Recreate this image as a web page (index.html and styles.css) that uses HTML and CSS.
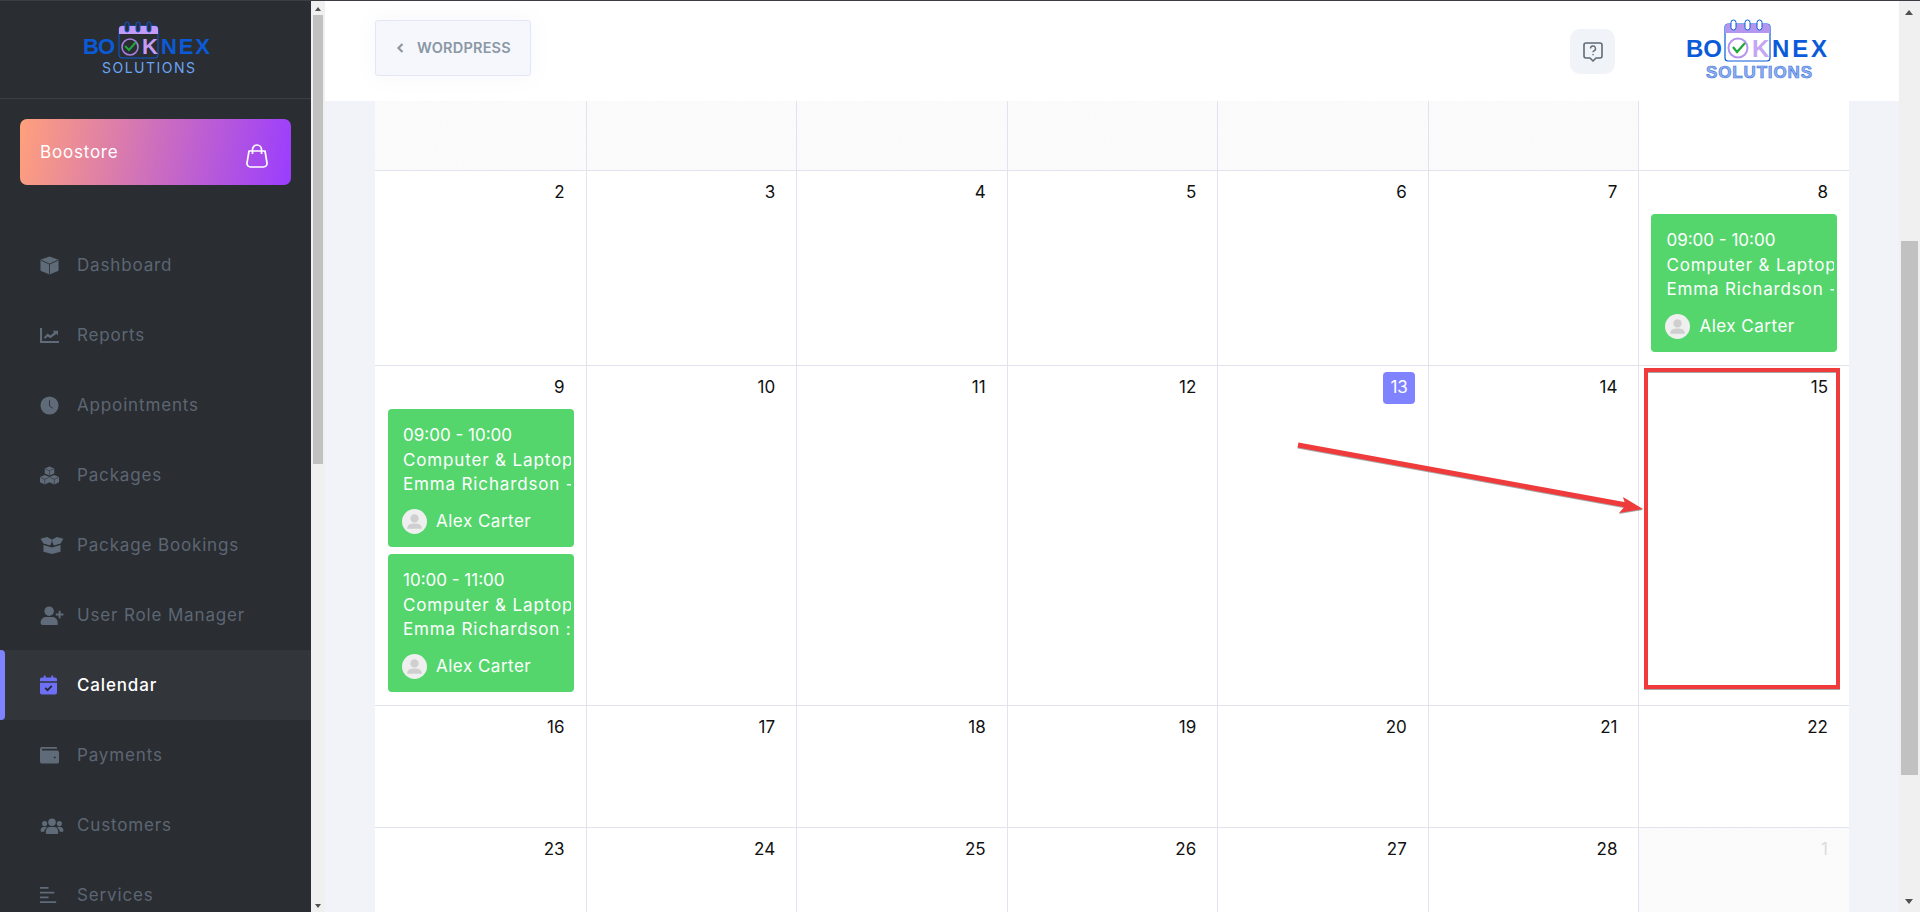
FILE: index.html
```html
<!DOCTYPE html>
<html lang="en">
<head>
    <meta charset="UTF-8">
    <title>Calendar</title>
    <link rel="stylesheet" href="styles.css">
</head>
<body>
<div class="app">
    <aside class="sidebar">
        <div class="side-logo">
            <svg width="130" height="56" viewBox="0 0 130 56">
                <rect x="36" y="6" width="39" height="32" rx="3" fill="none" stroke="#0b5bd9" stroke-width="1"/>
                <path d="M36 14V9a3 3 0 0 1 3-3h33a3 3 0 0 1 3 3v5z" fill="#c59bf5"/>
                <rect x="42" y="2" width="4" height="10" rx="2" fill="#2a2d32" stroke="#0b5bd9"/>
                <rect x="53" y="2" width="4" height="10" rx="2" fill="#2a2d32" stroke="#0b5bd9"/>
                <rect x="64" y="2" width="4" height="10" rx="2" fill="#2a2d32" stroke="#0b5bd9"/>
                <circle cx="47" cy="27" r="8" fill="#2a2d32" stroke="#a87fe0" stroke-width="1.600"/>
                <path d="M42 26l4 4 7-8" fill="none" stroke="#1fa83c" stroke-width="2"/>
                <text class="logo-word" x="0" y="34" textLength="32">BO</text>
                <text class="logo-word logo-k" x="59" y="34">K</text>
                <text class="logo-word" x="78" y="34" textLength="49">NEX</text>
                <text class="logo-sub" x="19" y="53" textLength="93">SOLUTIONS</text>
            </svg>
        </div>
        <a class="boostore">
            <span>Boostore</span>
            <svg width="22" height="24" viewBox="0 0 22 24" fill="none" stroke="#fff" stroke-width="1.700">
                <path d="M3 7h16l2 12a3.500 3.500 0 0 1-3.500 4h-13A3.500 3.500 0 0 1 1 19z" stroke-linejoin="round"/>
                <path d="M6.500 10V5.500a4.500 4.500 0 0 1 9 0V10"/>
            </svg>
        </a>
        <nav class="menu">
            <a class="menu-item">
                <svg class="menu-icon" viewBox="0 0 20 20"><path d="M10 .5l9.500 3.500v11.500L10 19.500.5 15.500V4z"/><path class="cut" d="M1 4.500l9 4 9-4M10 8.500V19"/></svg>
                <span>Dashboard</span>
            </a>
            <a class="menu-item">
                <svg class="menu-icon" viewBox="0 0 20 20"><path d="M0 2h2.200v13.800H20V18H0z"/><path d="M4 12l4-4 3 2 4-3.500-1.800-1.500H19v5l-1.800-1.800L11 13 8 11l-2.500 2.500z"/></svg>
                <span>Reports</span>
            </a>
            <a class="menu-item">
                <svg class="menu-icon" viewBox="0 0 20 20"><circle cx="10" cy="10" r="9.500"/><path class="cut" d="M10 4.500V10.500l3.500 2.500" stroke-width="2"/></svg>
                <span>Appointments</span>
            </a>
            <a class="menu-item">
                <svg class="menu-icon" viewBox="0 0 20 20"><path d="M10 .5l5 2v5.500L10 10 5 8V2.500zM5 9.500l5 2V17l-5 2.500L0 17V11.500zM15 9.500l5 2V17l-5 2.500L10 17V11.500z"/><path class="cut thin" d="M5.500 3l4.500 2 4.500-2M10 5V9.500M.5 12l4.500 2 4.500-2M5 14v5M10.500 12l4.500 2 4.500-2M15 14v5"/></svg>
                <span>Packages</span>
            </a>
            <a class="menu-item">
                <svg class="menu-icon wide" viewBox="0 0 24 20"><path d="M3 9.500l9 2.500 9-2.500V16.500L12 19 3 16.500z"/><path d="M0 3l7-2 5 3 5-3 7 2-3 5-7 2-2-4-2 4-7-2z"/><path class="cut thin" d="M12 4.500V11"/></svg>
                <span>Package Bookings</span>
            </a>
            <a class="menu-item">
                <svg class="menu-icon wide" viewBox="0 0 24 20"><circle cx="9" cy="5.500" r="5"/><path d="M0 17.500C0 13.500 3 11.500 6 11.500h6c3 0 6 2 6 6V20H2a2 2 0 0 1-2-2zM19 5h2v3h3v2h-3v3h-2v-3h-3V8h3z"/></svg>
                <span>User Role Manager</span>
            </a>
            <a class="menu-item active">
                <svg class="menu-icon cal" viewBox="0 0 18 20"><path d="M4 0h2v2h6V0h2v2h2a2 2 0 0 1 2 2v2H0V4a2 2 0 0 1 2-2h2zM0 7.500h18V18a2 2 0 0 1-2 2H2a2 2 0 0 1-2-2z"/><path class="cut-dark" d="M5.500 13l2.500 2.500 4.500-4.500" stroke-width="1.800"/></svg>
                <span>Calendar</span>
            </a>
            <a class="menu-item">
                <svg class="menu-icon" viewBox="0 0 20 20"><path d="M2 1h15a1 1 0 0 1 1 1v1H2.500a1 1 0 0 0 0 1.800H18a2 2 0 0 1 2 2V16.500a2 2 0 0 1-2 2H2a2 2 0 0 1-2-2V3a2 2 0 0 1 2-2z"/><circle class="dot" cx="15.500" cy="12" r="1"/></svg>
                <span>Payments</span>
            </a>
            <a class="menu-item">
                <svg class="menu-icon wide" viewBox="0 0 24 20"><circle cx="12" cy="6.500" r="4"/><circle cx="4.200" cy="8" r="2.700"/><circle cx="19.800" cy="8" r="2.700"/><path d="M5.500 18v-2c0-3 2.500-4.500 4-4.500h5c1.500 0 4 1.500 4 4.500v2a1 1 0 0 1-1 1h-11a1 1 0 0 1-1-1zM0 15c0-2 1.500-3.500 3-3.500h2.500c.5 0 1 .2 1.400.5-1.800 1-3 2.500-3.100 4.500H1a1 1 0 0 1-1-1zM24 15c0-2-1.500-3.500-3-3.500h-2.500c-.5 0-1 .2-1.400.5 1.800 1 3 2.500 3.100 4.500H23a1 1 0 0 0 1-1z"/></svg>
                <span>Customers</span>
            </a>
            <a class="menu-item">
                <svg class="menu-icon" viewBox="0 0 20 20"><path d="M0 1h9v2H0zM0 6h15v2H0zM0 11h9v2H0zM0 16h17v2H0z"/></svg>
                <span>Services</span>
            </a>
        </nav>
    </aside>

    <div class="scrollbar side-bar">
        <div class="arrow-up"></div>
        <div class="thumb"></div>
        <div class="arrow-down"></div>
    </div>

    <main class="main">
        <header class="topbar">
            <a class="back-btn">
                <svg width="8" height="10" viewBox="0 0 8 10" fill="none" stroke="#8a97a5" stroke-width="2.200"><path d="M6.500 1L2.500 5l4 4"/></svg>
                <span>WORDPRESS</span>
            </a>
            <div class="top-right">
                <a class="help-btn">
                    <svg width="22" height="22" viewBox="0 0 22 22" fill="none" stroke="#5f6b76" stroke-width="1.600">
                        <path d="M4 2h14a2 2 0 0 1 2 2v11a2 2 0 0 1-2 2h-4l-3 3-3-3H4a2 2 0 0 1-2-2V4a2 2 0 0 1 2-2z" stroke-linejoin="round"/>
                        <path d="M8.500 7.500a2.500 2.500 0 1 1 3.500 2.300c-.7.300-1 .7-1 1.500" stroke-width="1.400"/>
                        <path d="M11 13v1.300" stroke-width="1.400"/>
                    </svg>
                </a>
                <svg class="top-logo" width="146" height="62" viewBox="0 0 146 62">
                    <rect x="40" y="5" width="45" height="37" rx="3" fill="none" stroke="#0b5bd9" stroke-width="1.200"/>
                    <path d="M40 14V8a3 3 0 0 1 3-3h39a3 3 0 0 1 3 3v6z" fill="#b596ee"/>
                    <rect x="46" y="1" width="5" height="10" rx="2.500" fill="#fff" stroke="#0b5bd9"/>
                    <rect x="60" y="1" width="5" height="10" rx="2.500" fill="#fff" stroke="#0b5bd9"/>
                    <rect x="72" y="1" width="5" height="10" rx="2.500" fill="#fff" stroke="#0b5bd9"/>
                    <circle cx="53" cy="29" r="9.500" fill="#fff" stroke="#b596ee" stroke-width="2"/>
                    <path d="M48 28l4 5 8-9" fill="none" stroke="#1fa83c" stroke-width="2.200"/>
                    <text class="logo-word big" x="1" y="38" textLength="36">BO</text>
                    <text class="logo-word big logo-k-light" x="67" y="38">K</text>
                    <text class="logo-word big" x="87" y="38" textLength="55">NEX</text>
                    <text class="logo-sub big" x="21" y="59" textLength="106">SOLUTIONS</text>
                </svg>
            </div>
        </header>

        <div class="content">
            <div class="calendar">
                <div class="cell off first"></div>
                <div class="cell off first"></div>
                <div class="cell off first"></div>
                <div class="cell off first"></div>
                <div class="cell off first"></div>
                <div class="cell off first"></div>
                <div class="cell first"></div>

                <div class="cell"><span class="day">2</span></div>
                <div class="cell"><span class="day">3</span></div>
                <div class="cell"><span class="day">4</span></div>
                <div class="cell"><span class="day">5</span></div>
                <div class="cell"><span class="day">6</span></div>
                <div class="cell"><span class="day">7</span></div>
                <div class="cell">
                    <span class="day">8</span>
                    <div class="event">
                        <div class="event-line time">09:00 - 10:00</div>
                        <div class="event-line">Computer &amp; Laptop Repair</div>
                        <div class="event-line">Emma Richardson - $50</div>
                        <div class="event-staff"><span class="avatar"><svg viewBox="0 0 24 24"><circle cx="12" cy="9" r="4"/><path d="M5 19c0-4 3-5 7-5s7 1 7 5z"/></svg></span>Alex Carter</div>
                    </div>
                </div>

                <div class="cell">
                    <span class="day">9</span>
                    <div class="event">
                        <div class="event-line time">09:00 - 10:00</div>
                        <div class="event-line">Computer &amp; Laptop Repair</div>
                        <div class="event-line">Emma Richardson - $50</div>
                        <div class="event-staff"><span class="avatar"><svg viewBox="0 0 24 24"><circle cx="12" cy="9" r="4"/><path d="M5 19c0-4 3-5 7-5s7 1 7 5z"/></svg></span>Alex Carter</div>
                    </div>
                    <div class="event">
                        <div class="event-line time">10:00 - 11:00</div>
                        <div class="event-line">Computer &amp; Laptop Repair</div>
                        <div class="event-line">Emma Richardson : $50</div>
                        <div class="event-staff"><span class="avatar"><svg viewBox="0 0 24 24"><circle cx="12" cy="9" r="4"/><path d="M5 19c0-4 3-5 7-5s7 1 7 5z"/></svg></span>Alex Carter</div>
                    </div>
                </div>
                <div class="cell"><span class="day">10</span></div>
                <div class="cell"><span class="day">11</span></div>
                <div class="cell"><span class="day">12</span></div>
                <div class="cell"><span class="day today">13</span></div>
                <div class="cell"><span class="day">14</span></div>
                <div class="cell"><span class="day">15</span></div>

                <div class="cell"><span class="day">16</span></div>
                <div class="cell"><span class="day">17</span></div>
                <div class="cell"><span class="day">18</span></div>
                <div class="cell"><span class="day">19</span></div>
                <div class="cell"><span class="day">20</span></div>
                <div class="cell"><span class="day">21</span></div>
                <div class="cell"><span class="day">22</span></div>

                <div class="cell"><span class="day">23</span></div>
                <div class="cell"><span class="day">24</span></div>
                <div class="cell"><span class="day">25</span></div>
                <div class="cell"><span class="day">26</span></div>
                <div class="cell"><span class="day">27</span></div>
                <div class="cell"><span class="day">28</span></div>
                <div class="cell off"><span class="day muted">1</span></div>
            </div>
        </div>
    </main>

    <div class="scrollbar main-bar">
        <div class="arrow-up"></div>
        <div class="thumb"></div>
        <div class="arrow-down"></div>
    </div>

    <!-- red annotation drawn over the screenshot -->
    <svg class="annotation" width="1920" height="912" viewBox="0 0 1920 912">
        <rect x="1646" y="370" width="192" height="317" fill="none" stroke="#ef3b3b" stroke-width="4"/>
        <path d="M1298 445L1632 506" stroke="#ef3b3b" stroke-width="5" fill="none"/>
        <path d="M1623 497L1643 509 1619 513 1626 505z" fill="#ef3b3b"/>
    </svg>
</div>
</body>
</html>
```

FILE: styles.css
```css
* {
    box-sizing: border-box;
}

body {
    margin: 0;
    font-family: Inter, "Noto Sans", sans-serif;
    font-size: 17px;
    color: #111;
}

a {
    text-decoration: none;
    color: inherit;
}

.app {
    display: flex;
    height: 100vh;
    overflow: hidden;
    position: relative;
    border-top: 1px solid #3a3d42;
}

/* sidebar */
.sidebar {
    width: 311px;
    flex-shrink: 0;
    background: #2a2d32;
    overflow: hidden;
}

.side-logo {
    height: 98px;
    border-bottom: 1px solid #3b3e43;
    padding: 19px 0 0 83px;
}

.logo-word {
    font-family: "Liberation Sans", sans-serif;
    font-weight: 700;
    font-size: 22px;
    fill: #0b5bd9;
}

.logo-k {
    fill: #c59bf5;
}

.logo-k-light {
    fill: #c4a6f2;
}

.logo-sub {
    font-family: Inter, sans-serif;
    font-size: 14px;
    fill: #6aa5f5;
}

.logo-word.big {
    font-size: 24px;
}

.logo-sub.big {
    font-family: "Liberation Sans", sans-serif;
    font-size: 17px;
    font-weight: 700;
    fill: #8fb2ef;
    stroke: #3f72e0;
    stroke-width: .6px;
}

.boostore {
    margin: 20px 20px 0;
    height: 66px;
    padding: 0 23px 0 20px;
    border-radius: 7px;
    background: linear-gradient(100deg, #ffa07c 0%, #9a3dff 100%);
    color: #fff;
    display: flex;
    align-items: center;
    justify-content: space-between;
    letter-spacing: .8px;
}

.boostore svg {
    margin-top: 7px;
}

.menu {
    margin-top: 45px;
}

.menu-item {
    height: 70px;
    padding-left: 40px;
    display: flex;
    align-items: center;
    color: #5d6673;
    letter-spacing: .85px;
    position: relative;
}

.menu-icon {
    width: 19px;
    height: 19px;
    margin-right: 18px;
    fill: #5f6b78;
    flex-shrink: 0;
}

.menu-icon.wide {
    width: 24px;
    margin-right: 13px;
}

.menu-icon.cal {
    width: 17px;
    height: 20px;
    margin-right: 20px;
    fill: #6d6ff5;
}

.menu-icon .cut {
    fill: none;
    stroke: #2a2d32;
    stroke-width: .9;
}

.menu-icon .cut.thin {
    stroke-width: .6;
}

.menu-icon .cut-dark {
    fill: none;
    stroke: #23252f;
}

.menu-icon .dot {
    fill: #2a2d32;
}

.menu-item.active {
    background: #32353a;
    color: #fff;
    font-weight: 500;
}

.menu-item.active::before {
    content: "";
    position: absolute;
    left: 0;
    top: 0;
    bottom: 0;
    width: 5px;
    background: #8083ff;
    border-radius: 0 4px 4px 0;
}

/* fake browser scrollbars */
.scrollbar {
    flex-shrink: 0;
    background: #f0f0f0;
    position: relative;
}

.side-bar {
    width: 14px;
}

.main-bar {
    width: 21px;
}

.arrow-up,
.arrow-down {
    position: absolute;
    left: 50%;
    width: 0;
    height: 0;
    border-style: solid;
    border-color: transparent;
    border-width: 5px 4.500px;
    margin-left: -4.500px;
}

.arrow-up {
    top: 4px;
    border-bottom-color: #505050;
}

.arrow-down {
    bottom: 3px;
    border-top-color: #505050;
}

.side-bar .arrow-up,
.side-bar .arrow-down {
    border-width: 4px 3px;
    margin-left: -3px;
}

.side-bar .arrow-up {
    top: 2px;
}

.side-bar .arrow-down {
    bottom: 0;
}

.thumb {
    position: absolute;
    left: 2px;
    right: 2px;
    background: #c1c1c1;
}

.side-bar .thumb {
    top: 14px;
    height: 449px;
}

.main-bar .thumb {
    top: 240px;
    height: 534px;
}

/* main area */
.main {
    flex: 1;
    min-width: 0;
    display: flex;
    flex-direction: column;
    background: #f1f3f9;
}

.topbar {
    height: 100px;
    flex-shrink: 0;
    background: #fff;
    padding: 0 50px;
    display: flex;
    align-items: center;
    justify-content: space-between;
}

.back-btn {
    width: 156px;
    height: 56px;
    margin-top: -7px;
    border: 1px solid #e3e7f5;
    border-radius: 3px;
    background: #f6f7fc;
    box-shadow: 0 0 20px rgba(130, 140, 190, .08);
    display: flex;
    align-items: center;
    padding-left: 20px;
    gap: 13px;
    font-size: 14.500px;
    font-weight: 600;
    color: #8a97a5;
    letter-spacing: .2px;
}

.top-right {
    display: flex;
    align-items: center;
    margin-right: 18px;
}

.help-btn {
    width: 45px;
    height: 45px;
    margin-top: 1px;
    margin-right: 70px;
    border-radius: 10px;
    background: #f0f3f8;
    display: flex;
    align-items: center;
    justify-content: center;
}

.top-logo {
    margin-top: -2px;
}

.content {
    flex: 1;
    min-height: 0;
    overflow: hidden;
    padding: 0 50px;
}

.calendar {
    display: grid;
    grid-template-columns: repeat(7, 1fr);
    background: #fff;
}

.cell {
    min-height: 122px;
    padding: 6px 0 13px;
    border-left: 1px solid #e1e4ee;
    border-bottom: 1px solid #e1e4ee;
    text-align: right;
    overflow: hidden;
}

.cell:nth-child(7n + 1) {
    border-left: 0;
}

.cell.first {
    min-height: 0;
    height: 70px;
}

.cell.off {
    background-color: #fbfbfb;
    background-image: url("data:image/svg+xml,%3Csvg xmlns='http://www.w3.org/2000/svg' width='200' height='200'%3E%3Cfilter id='n'%3E%3CfeTurbulence baseFrequency='.8' numOctaves='2'/%3E%3CfeColorMatrix values='0 0 0 0 .5 0 0 0 0 .5 0 0 0 0 .5 0 0 0 .03 0'/%3E%3C/filter%3E%3Crect width='200' height='200' filter='url(%23n)'/%3E%3C/svg%3E");
}

.day {
    display: inline-block;
    height: 32px;
    line-height: 30px;
    padding: 0 8px;
    margin-right: 13px;
}

.day.today {
    background: #8083ff;
    color: #fff;
    border-radius: 4px;
    padding: 0 7px;
}

.day.muted {
    color: #dcdcdc;
}

.event {
    margin: 5px 12px 7px 12px;
    height: 138px;
    padding: 14px 3px 0 15px;
    background: #54d66d;
    border-radius: 4px;
    color: #fff;
    text-align: left;
    letter-spacing: .85px;
}

.cell:nth-child(7n + 1) .event {
    margin-left: 13px;
}

.event:last-child {
    margin-bottom: 0;
}

.event-line {
    height: 24.500px;
    line-height: 24.500px;
    white-space: nowrap;
    overflow: hidden;
}

.event-line.time {
    letter-spacing: 0;
}

.event-staff {
    margin-top: 12px;
    display: flex;
    align-items: center;
    gap: 9px;
    letter-spacing: .5px;
}

.avatar {
    width: 25px;
    height: 25px;
    margin-left: -1px;
    border-radius: 50%;
    background: #efefef;
    display: flex;
}

.avatar svg {
    fill: #cfcfcf;
}

.annotation {
    position: absolute;
    left: 0;
    top: -1px;
    pointer-events: none;
    filter: drop-shadow(0 1px 0 rgba(80, 80, 80, .5));
}
```
